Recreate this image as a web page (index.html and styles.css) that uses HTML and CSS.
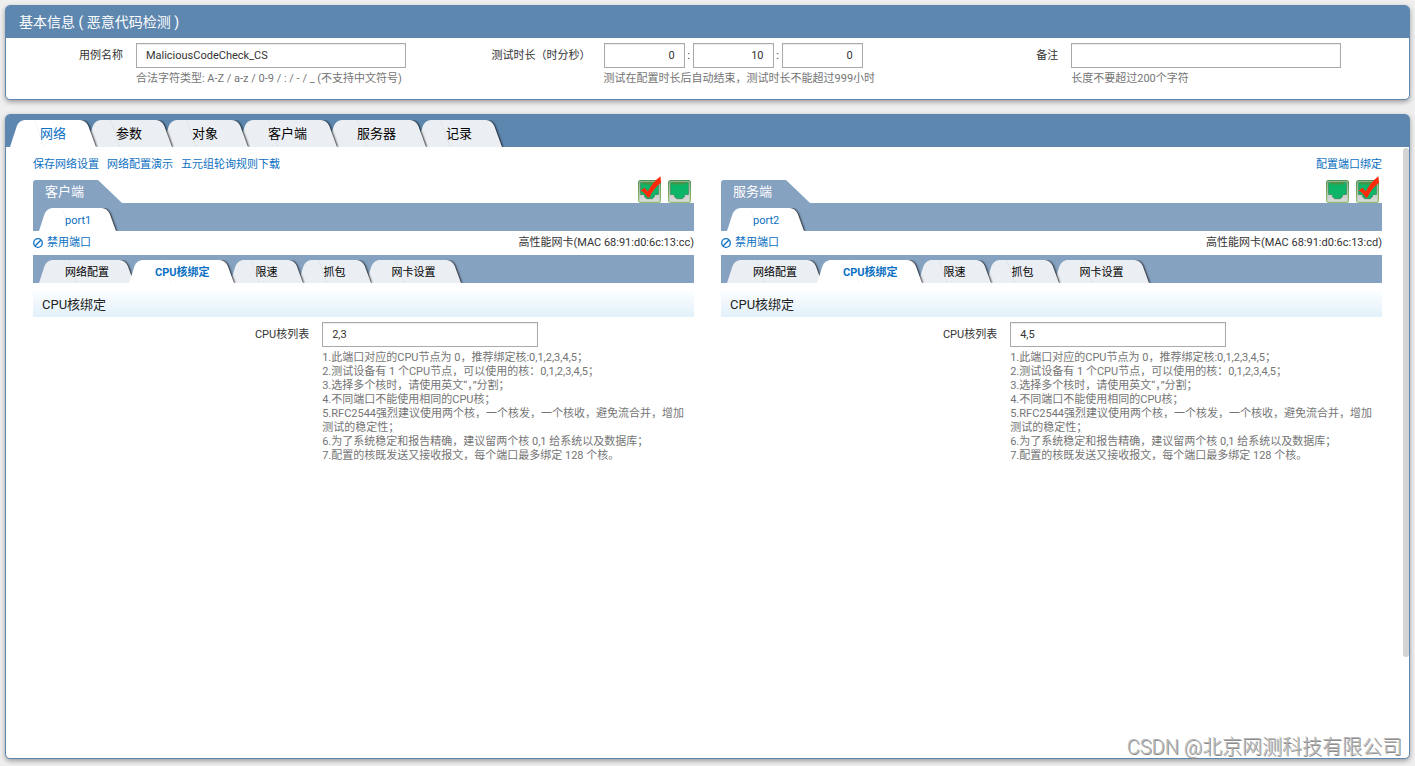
FILE: index.html
```
<!DOCTYPE html>
<html lang="zh-CN">
<head>
<meta charset="utf-8">
<title>恶意代码检测</title>
<link rel="stylesheet" href="styles.css">
</head>
<body>
<svg class="defs" aria-hidden="true">
  <defs>
    <linearGradient id="metal" x1="0" y1="0" x2="0" y2="1">
      <stop offset="0" stop-color="#a9bba6"/><stop offset="1" stop-color="#dadadc"/>
    </linearGradient>
    <linearGradient id="frame" x1="0" y1="0" x2="0" y2="1">
      <stop offset="0" stop-color="#4f9350"/><stop offset="1" stop-color="#94bf72"/>
    </linearGradient>
    <symbol id="jack" viewBox="0 0 23 23">
      <rect x="0.6" y="0.6" width="21.8" height="21.8" rx="2" fill="url(#metal)" stroke="url(#frame)" stroke-width="1.2"/>
      <path d="M2.600 2.500h17.800v12h-2.800l-1.200 1.200v1l-2 2H8.600l-2-2v-1l-1.200-1.200H2.600z" fill="#0cb568" stroke="#3b8a58" stroke-width="0.8"/>
      <path d="M5 3.600h13" stroke="#5f8a32" stroke-width="2" stroke-dasharray="1.500 0.700"/>
    </symbol>
    <symbol id="check" viewBox="0 0 23 23" overflow="visible">
      <path d="M2.500 10.500l4-2.700 3.300 3.700C12.500 5.500 17 .5 22.500-3.700l.5 6.200C17.500 7 14 11.500 11.500 17.500H9.700C7.500 14.300 5.500 12 2.500 10.500z" fill="#ff2a0c"/>
    </symbol>
    <symbol id="ban" viewBox="0 0 10 10">
      <circle cx="5" cy="5" r="4.300" fill="none" stroke="currentColor" stroke-width="1.300"/>
      <path d="M2.200 7.800l5.600-5.600" stroke="currentColor" stroke-width="1.300"/>
    </symbol>
  </defs>
</svg>

<section class="card">
  <h1 class="card-title">基本信息 ( 恶意代码检测 )</h1>
  <form class="basic-form">
    <div class="field">
      <label for="case-name">用例名称</label>
      <div class="control">
        <input class="text-input" id="case-name" type="text" value="MaliciousCodeCheck_CS">
        <p class="hint">合法字符类型: A-Z / a-z / 0-9 / : / - / _ (不支持中文符号)</p>
      </div>
    </div>
    <div class="field">
      <label for="hours">测试时长（时分秒）</label>
      <div class="control">
        <div class="duration">
          <input class="text-input" id="hours" type="text" value="0" aria-label="时"><span>:</span>
          <input class="text-input" type="text" value="10" aria-label="分"><span>:</span>
          <input class="text-input" type="text" value="0" aria-label="秒">
        </div>
        <p class="hint">测试在配置时长后自动结束，测试时长不能超过999小时</p>
      </div>
    </div>
    <div class="field">
      <label for="remark">备注</label>
      <div class="control">
        <input class="text-input" id="remark" type="text">
        <p class="hint">长度不要超过200个字符</p>
      </div>
    </div>
  </form>
</section>

<main class="card card-main">
  <nav class="tabs tabs-main">
    <button class="tab active">网络</button>
    <button class="tab">参数</button>
    <button class="tab">对象</button>
    <button class="tab">客户端</button>
    <button class="tab">服务器</button>
    <button class="tab">记录</button>
  </nav>
  <div class="content">
    <div class="links">
      <a href="#">保存网络设置</a>
      <a href="#">网络配置演示</a>
      <a href="#">五元组轮询规则下载</a>
      <a class="link-end" href="#">配置端口绑定</a>
    </div>
    <div class="columns">
      <section class="side">
        <header class="side-head">
          <h2 class="side-title">客户端</h2>
          <div class="jacks">
            <svg class="jack" viewBox="0 0 23 23"><use href="#jack"/><use href="#check"/></svg>
            <svg class="jack" viewBox="0 0 23 23"><use href="#jack"/></svg>
          </div>
        </header>
        <nav class="tabs tabs-sub"><button class="tab active">port1</button></nav>
        <div class="port-info">
          <a href="#"><svg class="ban"><use href="#ban"/></svg>禁用端口</a>
          <span>高性能网卡(MAC 68:91:d0:6c:13:cc)</span>
        </div>
        <nav class="tabs tabs-sub">
          <button class="tab">网络配置</button>
          <button class="tab active strong">CPU核绑定</button>
          <button class="tab">限速</button>
          <button class="tab">抓包</button>
          <button class="tab">网卡设置</button>
        </nav>
        <h3 class="section-title">CPU核绑定</h3>
        <div class="core-field">
          <label for="cores-client">CPU核列表</label>
          <div class="control">
            <input class="text-input" id="cores-client" type="text" value="2,3">
            <p class="hint">1.此端口对应的CPU节点为 0，推荐绑定核:0,1,2,3,4,5；<br>2.测试设备有 1 个CPU节点，可以使用的核：0,1,2,3,4,5；<br>3.选择多个核时，请使用英文“，”分割；<br>4.不同端口不能使用相同的CPU核；<br>5.RFC2544强烈建议使用两个核，一个核发，一个核收，避免流合并，增加测试的稳定性；<br>6.为了系统稳定和报告精确，建议留两个核 0,1 给系统以及数据库；<br>7.配置的核既发送又接收报文，每个端口最多绑定 128 个核。</p>
          </div>
        </div>
      </section>
      <section class="side">
        <header class="side-head">
          <h2 class="side-title">服务端</h2>
          <div class="jacks">
            <svg class="jack" viewBox="0 0 23 23"><use href="#jack"/></svg>
            <svg class="jack" viewBox="0 0 23 23"><use href="#jack"/><use href="#check"/></svg>
          </div>
        </header>
        <nav class="tabs tabs-sub"><button class="tab active">port2</button></nav>
        <div class="port-info">
          <a href="#"><svg class="ban"><use href="#ban"/></svg>禁用端口</a>
          <span>高性能网卡(MAC 68:91:d0:6c:13:cd)</span>
        </div>
        <nav class="tabs tabs-sub">
          <button class="tab">网络配置</button>
          <button class="tab active strong">CPU核绑定</button>
          <button class="tab">限速</button>
          <button class="tab">抓包</button>
          <button class="tab">网卡设置</button>
        </nav>
        <h3 class="section-title">CPU核绑定</h3>
        <div class="core-field">
          <label for="cores-server">CPU核列表</label>
          <div class="control">
            <input class="text-input" id="cores-server" type="text" value="4,5">
            <p class="hint">1.此端口对应的CPU节点为 0，推荐绑定核:0,1,2,3,4,5；<br>2.测试设备有 1 个CPU节点，可以使用的核：0,1,2,3,4,5；<br>3.选择多个核时，请使用英文“，”分割；<br>4.不同端口不能使用相同的CPU核；<br>5.RFC2544强烈建议使用两个核，一个核发，一个核收，避免流合并，增加测试的稳定性；<br>6.为了系统稳定和报告精确，建议留两个核 0,1 给系统以及数据库；<br>7.配置的核既发送又接收报文，每个端口最多绑定 128 个核。</p>
          </div>
        </div>
      </section>
    </div>
    <div class="scroll-thumb"></div>
  </div>
</main>
<div class="watermark">CSDN @北京网测科技有限公司</div>
</body>
</html>
```
FILE: styles.css
```
* {
  box-sizing: border-box;
}

body {
  position: relative;
  display: flex;
  flex-direction: column;
  gap: 14px;
  min-height: 100vh;
  margin: 0;
  padding: 5px 5px 7px;
  background: #efefef;
  color: #333;
  font: 11px/14px Roboto, "Noto Sans CJK SC", sans-serif;
}

h1, h2, h3, p {
  margin: 0;
  font-weight: 400;
}

a {
  color: #0b70c2;
  text-decoration: none;
}

button, input {
  font: inherit;
}

.defs {
  position: absolute;
  width: 0;
  height: 0;
}

.card {
  border: 1px solid #5e87af;
  border-radius: 5px;
  background: #fff;
  box-shadow: 0 2px 5px rgba(0, 0, 0, 0.35);
}

.card-title {
  height: 32px;
  padding-left: 13px;
  border-radius: 3px 3px 0 0;
  background: #5e87af;
  color: #fff;
  font-size: 14px;
  line-height: 32px;
}

.basic-form {
  display: grid;
  grid-template-columns: repeat(3, 1fr);
  padding: 5px 0 13px;
}

.field {
  display: grid;
  grid-template-columns: 5fr 13fr;
}

.field label,
.core-field label {
  padding-right: 13px;
  line-height: 25px;
  text-align: right;
  white-space: nowrap;
}

.text-input {
  display: block;
  width: 270px;
  height: 25px;
  padding: 0 9px;
  border: 1px solid #a9a9a9;
  border-radius: 0;
  background: #fff;
  box-shadow: inset 0 1px 1px rgba(0, 0, 0, 0.08);
  color: #333;
}

.duration {
  display: flex;
  line-height: 25px;
}

.duration .text-input {
  width: 81px;
  text-align: right;
}

.duration span {
  width: 8px;
  text-align: center;
}

.hint {
  margin-top: 4px;
  color: #757575;
}

.card-main {
  display: flex;
  flex: 1;
  flex-direction: column;
}

.tabs {
  display: flex;
  align-items: flex-end;
  overflow: hidden;
}

.tabs-main {
  height: 32px;
  padding-left: 4px;
  border-radius: 3px 3px 0 0;
  background: #5e87af;
  font-size: 13px;
}

.tabs-sub {
  height: 28px;
  padding-left: 6px;
  background: #86a2c1;
}

.tab {
  --fill: #ebeef3;
  position: relative;
  z-index: 1;
  height: 23px;
  margin-right: -5px;
  padding: 2px 25px 0 26px;
  border: 0;
  background: none;
  color: #000;
  white-space: nowrap;
}

.tabs-main .tab {
  height: 27px;
  margin-right: -10px;
  padding: 0 30px;
}

.tab:nth-child(1) { z-index: 6; }
.tab:nth-child(2) { z-index: 5; }
.tab:nth-child(3) { z-index: 4; }
.tab:nth-child(4) { z-index: 3; }
.tab:nth-child(5) { z-index: 2; }

.tab.active {
  --fill: #fff;
  z-index: 7;
  color: #0b70c2;
}

.tab.strong {
  font-weight: 700;
}

.tab::before,
.tab::after {
  content: "";
  position: absolute;
  top: 0;
  bottom: 0;
  z-index: -1;
  background: var(--fill);
}

.tab::before {
  left: 0;
  right: 40%;
  border-top-left-radius: 6px;
  transform: skewX(-18deg);
  transform-origin: left bottom;
}

.tab::after {
  left: 40%;
  right: 0;
  border-top-right-radius: 6px;
  box-shadow: 1px 0 2px rgba(0, 0, 0, 0.8);
  clip-path: inset(0 -4px 0 0);
  transform: skewX(20deg);
  transform-origin: right bottom;
}

.content {
  position: relative;
  flex: 1;
  padding: 11px 27px;
}

.links {
  display: flex;
  gap: 8px;
}

.link-end {
  margin-left: auto;
}

.columns {
  display: grid;
  grid-template-columns: 1fr 1fr;
  gap: 27px;
  margin-top: 8px;
}

.side-head {
  display: flex;
  justify-content: space-between;
}

.side-title {
  height: 23px;
  padding: 0 38px 0 12px;
  border-top-left-radius: 3px;
  background: #86a2c1;
  clip-path: polygon(0 0, calc(100% - 24px) 0, 100% 100%, 0 100%);
  color: #fff;
  font-size: 13px;
  line-height: 24px;
}

.jacks {
  display: flex;
  gap: 7px;
  padding-right: 3px;
}

.jack {
  width: 23px;
  height: 23px;
  overflow: visible;
}

.port-info {
  display: flex;
  align-items: center;
  justify-content: space-between;
  height: 24px;
}

.port-info a {
  display: flex;
  align-items: center;
  gap: 4px;
}

.ban {
  width: 10px;
  height: 10px;
}

.section-title {
  height: 26px;
  margin-top: 8px;
  padding-left: 9px;
  background: linear-gradient(#fcfeff, #e1f0f9);
  color: #222;
  font-size: 13px;
  line-height: 27px;
}

.core-field {
  display: grid;
  grid-template-columns: 7fr 9fr;
  margin-top: 5px;
}

.core-field .text-input {
  width: 216px;
}

.core-field .hint {
  padding-right: 8px;
}

.scroll-thumb {
  position: absolute;
  top: 1px;
  right: 0;
  width: 6px;
  height: 509px;
  border-radius: 3px;
  background: #d4d4d4;
}

.watermark {
  position: absolute;
  right: 13px;
  bottom: 6px;
  color: #b4b4b4;
  font-size: 20px;
  font-weight: 300;
  line-height: 26px;
  text-shadow: 1px 1px 0 #8c8c8c;
}
```
